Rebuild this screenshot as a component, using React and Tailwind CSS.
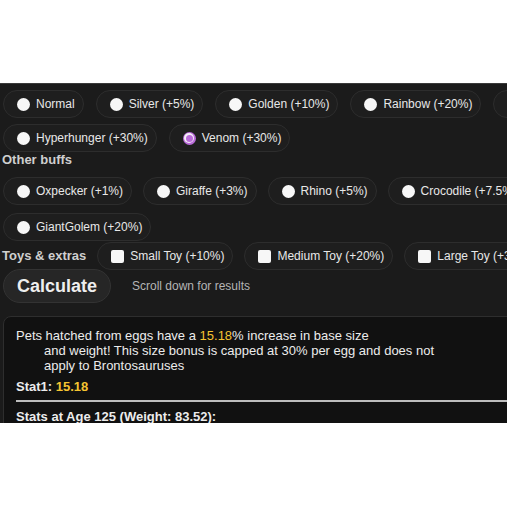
import React from 'react'

const eggs = ['Normal', 'Silver (+5%)', 'Golden (+10%)', 'Rainbow (+20%)', 'Gold']
const eggs2 = ['Hyperhunger (+30%)', 'Venom (+30%)']
const buffs = ['Oxpecker (+1%)', 'Giraffe (+3%)', 'Rhino (+5%)', 'Crocodile (+7.5%)']
const toys = ['Small Toy (+10%)', 'Medium Toy (+20%)', 'Large Toy (+30%)']

function Radio({ checked }) {
  if (checked) {
    return (
      <span className="ml-[5px] mr-[3px] flex h-[13px] w-[13px] shrink-0 items-center justify-center rounded-full bg-[#b86ad8]">
        <span className="flex h-[10px] w-[10px] items-center justify-center rounded-full bg-[#f4eef7]">
          <span className="h-[7px] w-[7px] rounded-full bg-[#b86ad8]" />
        </span>
      </span>
    )
  }
  return <span className="ml-[5px] mr-[3px] h-[13px] w-[13px] shrink-0 rounded-full bg-[#f7f7f7]" />
}

function Pill({ label, checked, box }) {
  return (
    <div className="flex h-[28px] shrink-0 items-center whitespace-nowrap rounded-full border border-[#2d2d2d] bg-[#1e1e1e] px-2 text-[12px] text-[#e8e8e8]">
      {box ? (
        <span className="ml-[5px] mr-[3px] h-[13px] w-[13px] shrink-0 rounded-[2px] bg-[#f7f7f7]" />
      ) : (
        <Radio checked={checked} />
      )}
      <span className="ml-[3px]">{label}</span>
    </div>
  )
}

export default function App() {
  return (
    <div className="h-[507px] w-[507px] overflow-hidden bg-white font-['Liberation_Sans',Arial,sans-serif]">
      <div className="h-[83px]" />
      <div className="h-[340px] overflow-hidden border-t border-[#3a3a3a] bg-[#1b1b1b] pl-[3px] pt-[6px]">
        <div className="flex gap-[12px]">
          {eggs.map((e) => (
            <Pill key={e} label={e} />
          ))}
        </div>
        <div className="mt-[6px] flex gap-[12px]">
          {eggs2.map((e, i) => (
            <Pill key={e} label={e} checked={i === 1} />
          ))}
        </div>
        <h3 className="-ml-[1px] text-[13px] font-bold leading-[16px] text-[#cfcfcf]">Other buffs</h3>
        <div className="mt-[9px] flex gap-[11px]">
          {buffs.map((b) => (
            <Pill key={b} label={b} />
          ))}
        </div>
        <div className="mt-[8px] flex">
          <Pill label="GiantGolem (+20%)" />
        </div>
        <div className="mt-[1px] flex items-center gap-[11px]">
          <span className="-ml-[1px] shrink-0 whitespace-nowrap text-[13px] font-bold text-[#cfcfcf]">
            Toys &amp; extras
          </span>
          {toys.map((t) => (
            <Pill key={t} label={t} box />
          ))}
        </div>
        <div className="-mt-[1px] flex items-center gap-[21px]">
          <button className="h-[34px] w-[108px] shrink-0 rounded-full border border-[#333] bg-[#262626] text-[18px] font-bold text-[#eeeeee]">
            Calculate
          </button>
          <span className="whitespace-nowrap text-[12px] text-[#b5b5b5]">Scroll down for results</span>
        </div>
        <div className="mt-[13px] w-[600px] rounded-tl-lg border border-[#2e2e2e] bg-[#111111] pl-3 pt-[11px] text-[13px] leading-[15px] text-[#ececec]">
          <p>
            Pets hatched from eggs have a <span className="text-[#f5c431]">15.18</span>% increase in base size
          </p>
          <p className="pl-7">and weight! This size bonus is capped at 30% per egg and does not</p>
          <p className="pl-7">apply to Brontosauruses</p>
          <p className="mt-[6px] font-bold">
            Stat1: <span className="text-[#f5c431]">15.18</span>
          </p>
          <div className="mt-[6px] h-[2px] bg-[#bdbdbd]" />
          <p className="mt-[7px] font-bold">Stats at Age 125 (Weight: 83.52):</p>
        </div>
      </div>
    </div>
  )
}
